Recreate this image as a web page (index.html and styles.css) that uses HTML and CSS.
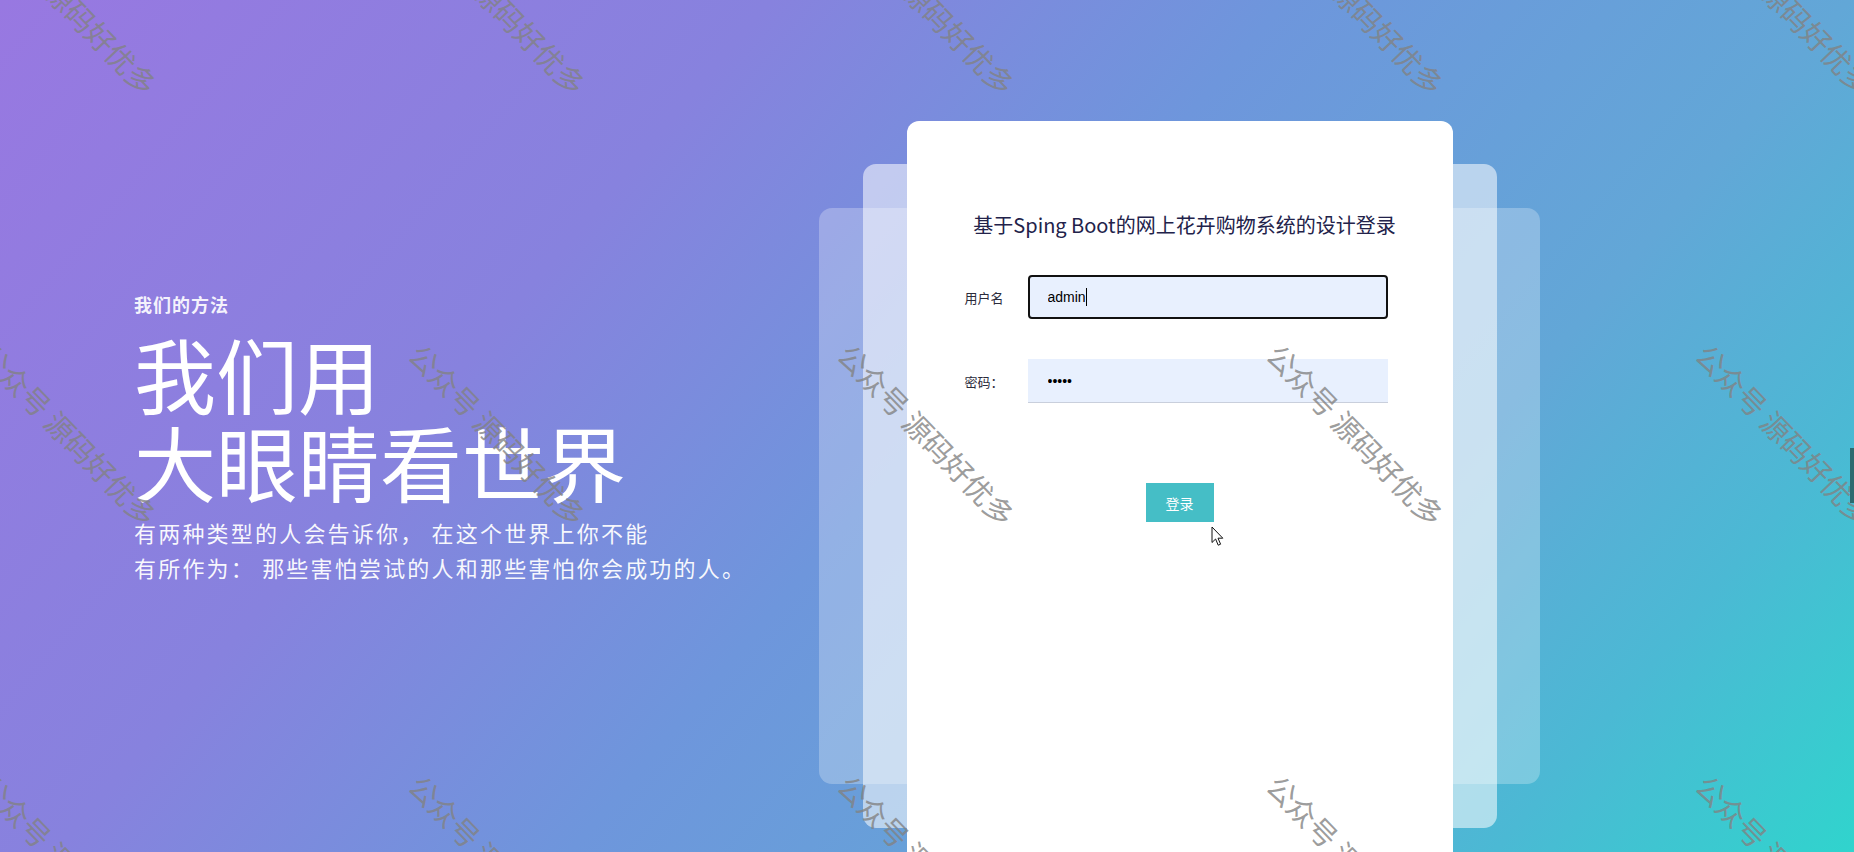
FILE: index.html
```html
<!DOCTYPE html>
<html lang="zh-CN">
<head>
<meta charset="utf-8">
<title>登录</title>
<link rel="stylesheet" href="styles.css">
</head>
<body>
<div class="page">
  <section class="intro">
    <div class="eyebrow">我们的方法</div>
    <h1 class="headline">我们用<br>大眼睛看世界</h1>
    <p class="lead">有两种类型的人会告诉你， 在这个世界上你不能<br>有所作为： 那些害怕尝试的人和那些害怕你会成功的人。</p>
  </section>
  <section class="stack">
    <div class="layer layer-back"></div>
    <div class="layer layer-mid"></div>
    <div class="card">
      <h2 class="card-title">基于Sping Boot的网上花卉购物系统的设计登录</h2>
      <form class="login-form">
        <div class="field">
          <label class="field-label" for="u">用户名</label>
          <div class="input-wrap">
            <input id="u" class="input input-focus" type="text" value="admin">
            <span class="caret"></span>
          </div>
        </div>
        <div class="field">
          <label class="field-label" for="p">密码：</label>
          <input id="p" class="input input-line" type="password" value="12345">
        </div>
        <div class="actions">
          <button type="button" class="btn">登录</button>
          <svg class="cursor" width="13" height="21" viewBox="0 0 13 21"><path d="M1 1 L1 16.5 L4.6 13 L7.2 19.2 L9.6 18.2 L7 12.2 L11.8 12.2 Z" fill="#fff" stroke="#111" stroke-width="1" stroke-linejoin="round"/></svg>
        </div>
      </form>
    </div>
  </section>
  <div class="watermarks">
    <span class="wm">公众号 源码好优多</span><span class="wm">公众号 源码好优多</span><span class="wm">公众号 源码好优多</span><span class="wm">公众号 源码好优多</span><span class="wm">公众号 源码好优多</span>
    <span class="wm">公众号 源码好优多</span><span class="wm">公众号 源码好优多</span><span class="wm">公众号 源码好优多</span><span class="wm">公众号 源码好优多</span><span class="wm">公众号 源码好优多</span>
    <span class="wm">公众号 源码好优多</span><span class="wm">公众号 源码好优多</span><span class="wm">公众号 源码好优多</span><span class="wm">公众号 源码好优多</span><span class="wm">公众号 源码好优多</span>
  </div>
  <div class="edge-tab"></div>
</div>
</body>
</html>
```
FILE: styles.css
```css
* { box-sizing: border-box; }
html, body { margin: 0; padding: 0; }
body {
  font-family: "Noto Sans CJK SC", "Noto Sans", sans-serif;
  overflow: hidden;
}
.page {
  position: relative;
  width: 100%;
  height: 852px;
  overflow: hidden;
  display: flex;
  align-items: flex-start;
  background: linear-gradient(130deg, #9878e1 0%, #8782de 30%, #6e96dc 50%, #62a7d7 72%, #4bb9d4 86%, #30d4cd 100%);
}
.intro {
  flex: 0 0 819px;
  padding: 292px 0 0 134px;
  color: #fff;
}
.eyebrow {
  font-size: 18px;
  line-height: 24px;
  font-weight: 700;
  letter-spacing: 1px;
  color: rgba(255,255,255,0.92);
}
.headline {
  margin: 13px 0 0;
  font-size: 82px;
  line-height: 88px;
  font-weight: 400;
  color: #fff;
}
.lead {
  margin: 10px 0 0;
  font-size: 22px;
  line-height: 35px;
  letter-spacing: 2.2px;
  white-space: pre;
  color: rgba(255,255,255,0.94);
}
.stack {
  flex: 0 0 721px;
  height: 750px;
  margin-top: 121px;
  display: grid;
  grid-template: 1fr / 1fr;
}
.stack > * {
  grid-area: 1 / 1;
  align-self: center;
  justify-self: center;
}
.layer { border-radius: 13px; }
.layer-back {
  width: 721px;
  height: 576px;
  background: rgba(255,255,255,0.26);
}
.layer-mid {
  width: 634px;
  height: 664px;
  background: rgba(255,255,255,0.55);
}
.card {
  width: 546px;
  height: 750px;
  background: #fff;
  border-radius: 12px;
  padding-top: 90px;
}
.card-title {
  margin: 0;
  padding-left: 10px;
  text-align: center;
  font-size: 20px;
  line-height: 28px;
  font-weight: 400;
  color: #22224a;
}
.login-form {
  margin-top: 36px;
  display: flex;
  flex-direction: column;
  gap: 40px;
}
.field {
  display: flex;
  align-items: center;
  padding-left: 58px;
}
.field-label {
  width: 63px;
  font-size: 13px;
  color: #2b2b3b;
}
.input-wrap { position: relative; }
.input {
  width: 360px;
  height: 44px;
  padding: 0 0 0 20px;
  font-family: "Liberation Sans", Arial, sans-serif;
  font-size: 14px;
  color: #000;
  background: #e8f0fe;
  outline: none;
}
.input-focus {
  border: 2px solid #111;
  border-radius: 4px;
  padding-left: 18px;
}
.input-line {
  border: none;
  border-bottom: 1px solid #c9cfdc;
  border-radius: 0;
}
.caret {
  position: absolute;
  left: 58px;
  top: 13px;
  width: 1px;
  height: 18px;
  background: #000;
}
.actions {
  position: relative;
  display: flex;
  justify-content: center;
  margin-top: 40px;
}
.btn {
  width: 68px;
  height: 39px;
  border: none;
  background: #45bec6;
  color: #fff;
  font-family: "Noto Sans CJK SC", sans-serif;
  font-size: 14px;
  cursor: pointer;
}
.cursor {
  position: absolute;
  left: 304px;
  top: 43px;
}
.watermarks {
  position: absolute;
  left: -2px;
  top: -94px;
  display: grid;
  grid-template-columns: repeat(5, 429px);
  grid-auto-rows: 431px;
  pointer-events: none;
}
.wm {
  display: block;
  width: max-content;
  height: 32px;
  white-space: nowrap;
  transform-origin: 0 0;
  transform: rotate(46deg);
  font-size: 29px;
  line-height: 32px;
  color: rgba(130,130,130,0.8);
}
.edge-tab {
  position: absolute;
  right: 0;
  top: 448px;
  width: 4px;
  height: 55px;
  background: #2d6b70;
}
```
